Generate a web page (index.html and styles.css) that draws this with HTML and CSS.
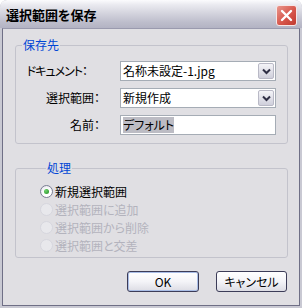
FILE: index.html
```html
<!DOCTYPE html>
<html lang="ja">
<head>
<meta charset="utf-8">
<title>選択範囲を保存</title>
<link rel="stylesheet" href="styles.css">
</head>
<body>
<div class="window">
  <div class="titlebar">
    <span class="title">選択範囲を保存</span>
    <span class="close">
      <svg width="13" height="13" viewBox="0 0 13 13"><path d="M2 2 L11 11 M11 2 L2 11" stroke="#fff" stroke-width="2.4" stroke-linecap="round"/></svg>
    </span>
  </div>
  <div class="content">
    <fieldset class="group group-dest">
      <legend>保存先</legend>
      <div class="form">
        <span class="label label-doc">ドキュメント：</span>
        <div class="combo"><span class="combo-text">名称未設定-1.jpg</span><span class="drop"><svg width="9" height="7" viewBox="0 0 9 7"><path d="M1 1.5 L4.5 5 L8 1.5" fill="none" stroke="#2f2f45" stroke-width="2"/></svg></span></div>
        <span class="label">選択範囲：</span>
        <div class="combo"><span class="combo-text">新規作成</span><span class="drop"><svg width="9" height="7" viewBox="0 0 9 7"><path d="M1 1.5 L4.5 5 L8 1.5" fill="none" stroke="#2f2f45" stroke-width="2"/></svg></span></div>
        <span class="label">名前：</span>
        <div class="textbox"><span class="sel">デフォルト</span></div>
      </div>
    </fieldset>
    <fieldset class="group group-op">
      <legend>処理</legend>
      <div class="radio checked"><span class="dot"></span><span>新規選択範囲</span></div>
      <div class="radio disabled"><span class="dot"></span><span>選択範囲に追加</span></div>
      <div class="radio disabled"><span class="dot"></span><span>選択範囲から削除</span></div>
      <div class="radio disabled"><span class="dot"></span><span>選択範囲と交差</span></div>
    </fieldset>
    <div class="buttons">
      <button class="btn btn-default">OK</button>
      <button class="btn">キャンセル</button>
    </div>
  </div>
</div>
</body>
</html>
```

FILE: styles.css
```css
html, body {
  margin: 0;
  padding: 0;
  background: #ffffff;
}
body {
  font-family: "Noto Sans CJK JP", "Liberation Sans", sans-serif;
  font-size: 12px;
  font-feature-settings: "palt";
  color: #000;
}
.window {
  width: 302px;
  height: 308px;
  box-sizing: border-box;
  display: flex;
  flex-direction: column;
  background: #c9c9d3;
  border-radius: 7px 7px 0 0;
  padding: 0 2px 2px 2px;
  overflow: hidden;
}
.titlebar {
  height: 28px;
  margin: 0 -2px;
  display: flex;
  align-items: center;
  justify-content: space-between;
  padding: 0 5px 0 6px;
  box-sizing: border-box;
  background: linear-gradient(#fbfbfd 0%, #e9e9ef 18%, #d2d2dc 50%, #bdbdcb 80%, #b3b3c3 100%);
  border-radius: 7px 7px 0 0;
}
.title {
  font-size: 13px;
  font-weight: bold;
  line-height: 16px;
  margin-top: 1px;
  color: #000;
}
.close {
  width: 21px;
  height: 21px;
  box-sizing: border-box;
  border: 1px solid #f6e6e6;
  border-radius: 3px;
  background: linear-gradient(135deg, #e9968c 0%, #d7564b 55%, #c0392f 100%);
  display: flex;
  align-items: center;
  justify-content: center;
  margin-top: 2px;
}
.content {
  flex: 1;
  background: #e0dfe3;
  border: 1px solid #6f6f86;
  border-top: 1px solid #9a9aae;
  display: flex;
  flex-direction: column;
}
.group {
  margin: 0 11px 0 12px;
  border: 1px solid #c3c3cc;
  border-radius: 3px;
  padding: 0;
  min-width: 0;
}
.group legend {
  color: #0046d5;
  line-height: 14px;
  padding: 0 1px;
  margin-left: 6px;
}
.group-dest {
  margin-top: 9px;
  padding: 9px 11px 8px 0;
}
.form {
  display: grid;
  grid-template-columns: 91px 1fr;
  column-gap: 13px;
  row-gap: 7px;
  align-items: center;
}
.label {
  text-align: right;
  line-height: 20px;
  padding-right: 7px;
  white-space: nowrap;
}
.label-doc {
  padding-right: 20px;
  letter-spacing: -1px;
}
.combo {
  height: 20px;
  box-sizing: border-box;
  border: 1px solid #a5acb5;
  background: #fff;
  display: flex;
  align-items: center;
  justify-content: space-between;
  padding: 1px 1px 1px 2px;
}
.combo-text {
  line-height: 16px;
}
.drop {
  width: 16px;
  height: 16px;
  box-sizing: border-box;
  border: 1px solid #b9b9c6;
  border-radius: 2px;
  background: linear-gradient(#f4f4f8, #cfcfdb);
  display: flex;
  align-items: center;
  justify-content: center;
}
.textbox {
  height: 20px;
  box-sizing: border-box;
  border: 1px solid #a5acb5;
  background: #fff;
  padding: 1px 2px;
  display: flex;
  align-items: center;
}
.sel {
  background: #bcbcc4;
  line-height: 16px;
}
.group-op {
  margin-top: 17px;
  padding: 7px 0 3px 24px;
}
.radio {
  display: flex;
  align-items: center;
  height: 18px;
  gap: 2px;
}
.radio .dot {
  width: 13px;
  height: 13px;
  box-sizing: border-box;
  border-radius: 50%;
  border: 1px solid #7a7e94;
  background: radial-gradient(circle at 60% 65%, #ffffff 40%, #dcdce4 100%);
  display: flex;
  align-items: center;
  justify-content: center;
}
.radio.checked .dot::after {
  content: "";
  width: 5px;
  height: 5px;
  border-radius: 50%;
  background: radial-gradient(circle at 35% 35%, #6fd36f, #1f8a1f);
}
.radio.disabled {
  color: #b3b3bd;
}
.radio.disabled .dot {
  border-color: #d6d6de;
  background: #e8e8ec;
}
.buttons {
  display: flex;
  justify-content: flex-end;
  gap: 17px;
  margin-top: 13px;
  padding-right: 12px;
}
.btn {
  width: 71px;
  height: 21px;
  box-sizing: border-box;
  font-family: "Noto Sans CJK JP", "Liberation Sans", sans-serif;
  font-size: 12px;
  font-feature-settings: "palt";
  line-height: 16px;
  padding: 0;
  color: #000;
  border: 1px solid #3c3c58;
  border-radius: 3px;
  background: linear-gradient(#ffffff 0%, #f4f4f8 50%, #dcdce4 100%);
}
.btn-default {
  width: 72px;
  box-shadow: inset 0 0 0 1px #a9bde6;
}
```
